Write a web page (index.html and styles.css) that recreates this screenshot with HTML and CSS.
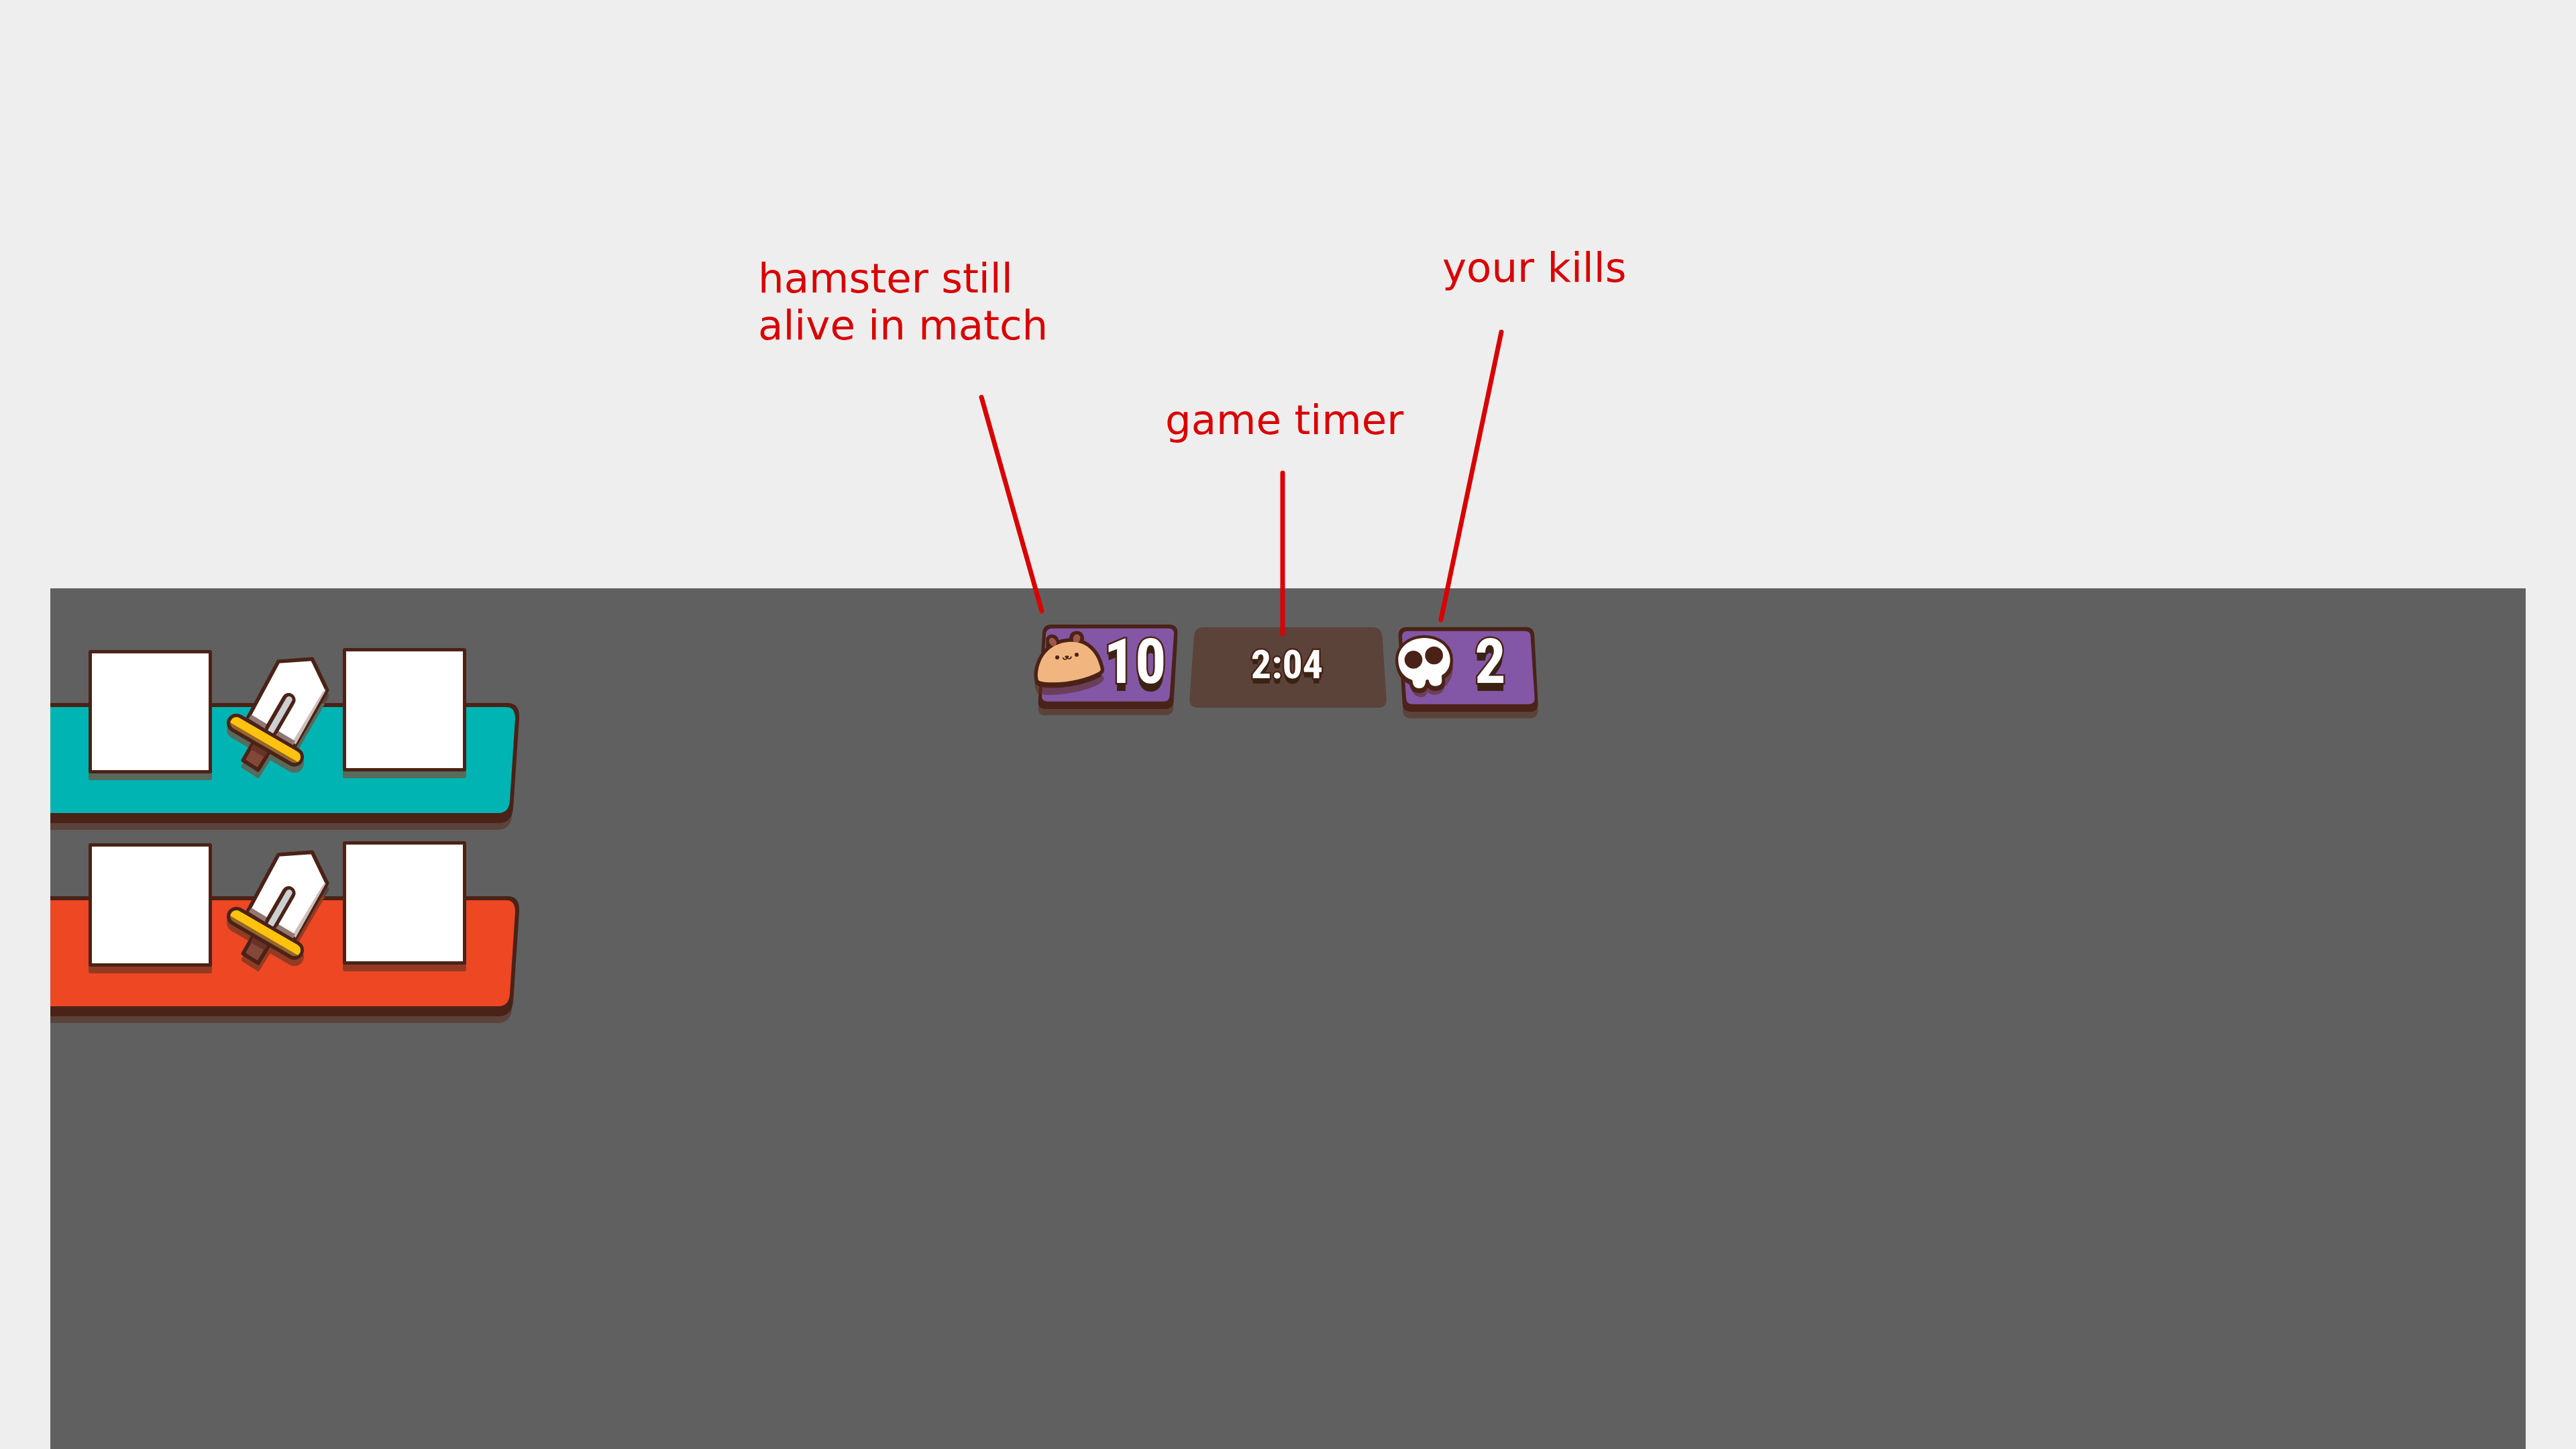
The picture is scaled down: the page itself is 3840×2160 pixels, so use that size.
FILE: index.html
```html
<!DOCTYPE html>
<html lang="en">
<head>
<meta charset="utf-8">
<title>Match HUD</title>
<link rel="stylesheet" href="styles.css">
</head>
<body>
<svg class="defs" aria-hidden="true">
  <symbol id="sword" viewBox="-12 45 585 615">
    <clipPath id="over-screen"><path d="M0 0H600V296H0Z"/></clipPath>
    <clipPath id="over-banner"><path d="M0 296H600V700H0Z"/></clipPath>
    <clipPath id="guard"><path d="M110.700 360.700L370.700 511.700A27 27 0 0 1 343.300 558.300L83.300 407.300A27 27 0 0 1 110.700 360.700Z"/></clipPath>
    <g class="sword-shadow-screen" clip-path="url(#over-screen)">
      <path d="M285 136L436 125L503 264L356 518L150 388Z"/>
    </g>
    <g class="sword-shadow-banner" clip-path="url(#over-banner)">
      <path d="M285 136L436 125L503 264L356 518L150 388Z"/>
      <path class="guard-line" d="M97 412L356 563"/>
      <path d="M172 500L127 578L194 621L242 544Z"/>
    </g>
    <path class="blade" d="M285 108L436 97L503 236L356 490L148 362Z"/>
    <path fill="#cdbfba" d="M496 232L482 246L350 464L362 480L495 241Z"/>
    <path fill="#927870" d="M164 346L360 464L348 486L152 364Z"/>
    <path stroke="#4b2217" stroke-width="62" stroke-linecap="round" d="M331 280L256 410"/>
    <path stroke="#cdd0d3" stroke-width="28" stroke-linecap="round" d="M333 278L252 418"/>
    <path class="handle" d="M172 472L127 550L194 593L242 516Z"/>
    <path fill="#6a3327" d="M173 476L238 512L220 535L160 500Z"/>
    <path class="guard-outline" d="M97 384L356 535"/>
    <g clip-path="url(#guard)">
      <path fill="#92672b" d="M40 330H420V600H40Z"/>
      <path fill="#ffc20e" d="M60 376L400 574L440 480L100 300Z"/>
    </g>
  </symbol>
  <symbol id="banner" viewBox="0 0 704 275">
    <path class="banner-shade" d="M0 92H690L688 252Q686 272 666 272H0Z"/>
    <path class="banner-edge" d="M0 83H682Q700 83 699 106L690 240Q688 262 668 262H0Z"/>
    <path class="banner-fill" d="M0 89H680Q693 89 693 106L685 228Q684 247 668 247H0Z"/>
  </symbol>
</svg>

<header class="notes">
  <p class="note note-alive">hamster still<br>alive in match</p>
  <p class="note note-timer">game timer</p>
  <p class="note note-kills">your kills</p>
  <svg class="pointers" viewBox="1130 0 1580 960" aria-hidden="true">
    <path d="M1463 592L1553 911M1912 705V945M2238 495L2148 924"/>
  </svg>
</header>

<main class="screen">
  <section class="squads">
    <div class="squad squad-teal">
      <svg class="banner"><use href="#banner"/></svg>
      <div class="duel">
        <div class="slot slot-low"></div>
        <svg class="sword"><use href="#sword"/></svg>
        <div class="slot"></div>
      </div>
    </div>
    <div class="squad squad-red">
      <svg class="banner"><use href="#banner"/></svg>
      <div class="duel">
        <div class="slot slot-low"></div>
        <svg class="sword"><use href="#sword"/></svg>
        <div class="slot"></div>
      </div>
    </div>
  </section>

  <section class="hud">
    <div class="badge">
      <svg class="art" viewBox="63 93 696 420" aria-hidden="true">
        <path class="plate-shade" d="M138 121H672Q708 121 706 160L688 463Q686 499 650 499H115Q81 499 83 463L102 157Q104 121 138 121Z"/>
        <path class="ink" d="M142 93H668Q708 93 706 132L688 435Q686 471 650 471H115Q81 471 83 435L102 132Q104 93 142 93Z"/>
        <path class="plate" d="M145 110H665Q692 110 690 136L671 410Q669 437 642 437H124Q98 437 99 410L117 136Q119 110 145 110Z"/>
        <path class="cast" d="M67 350C60 310 85 240 120 215L362 315Q380 325 376 340C350 385 160 420 90 404Q68 398 67 350Z"/>
        <path class="ink" d="M118 200V158C122 134 156 130 170 150L176 164L222 156C222 110 288 110 288 156L286 180Z"/>
        <path class="ink-line" d="M83 350C78 330 80 300 95 265L352 316C290 348 200 368 110 360Q86 358 83 350Z"/>
        <path class="body" d="M83 340C78 320 80 290 95 255C120 200 170 170 235 170C300 172 345 215 362 290Q364 300 352 306C290 338 200 358 110 350Q86 348 83 340Z"/>
        <ellipse class="ear" cx="148" cy="171" rx="15" ry="20" transform="rotate(-35 148 171)"/>
        <ellipse class="ear" cx="255" cy="156" rx="16" ry="20" transform="rotate(12 255 156)"/>
        <path class="fur" d="M83 340C78 320 80 290 95 255C120 200 170 170 235 170C300 172 345 215 362 290Q364 300 352 306C290 338 200 358 110 350Q86 348 83 340Z"/>
        <circle class="ink" cx="168" cy="240" r="9"/>
        <circle class="ink" cx="255" cy="228" r="9"/>
        <ellipse class="ink" cx="211" cy="237" rx="9" ry="5"/>
        <path class="mouth" d="M194 242Q196 250 204 249Q212 247 212 239Q215 247 222 246Q231 244 230 237"/>
      </svg>
      <span class="count count-alive">10</span>
    </div>
    <div class="timer">
      <svg class="art" viewBox="39 93 921 420" aria-hidden="true">
        <path fill="#5b433a" d="M104 105H857Q900 105 902 150L920 425Q922 465 882 465H79Q38 465 40 425L59 150Q61 105 104 105Z"/>
      </svg>
      <time class="clock">2:04</time>
    </div>
    <div class="badge">
      <svg class="art" viewBox="60 93 657 420" aria-hidden="true">
        <path class="plate-shade" d="M110 132H646L698 476Q699 512 662 512H132Q94 512 93 476Z"/>
        <path class="ink" d="M112 104H643Q680 104 682 143L698 447Q699 483 662 483H132Q94 483 92 447L74 143Q73 104 112 104Z"/>
        <path class="plate" d="M116 122H640Q664 122 665 146L683 424Q683 449 659 449H136Q110 449 108 422L90 146Q90 122 116 122Z"/>
        <path class="cast" d="M73 276A116 98 0 0 0 130 367C135 430 200 430 204 392C215 415 275 415 280 372C305 350 318 320 318 280Z"/>
        <path class="ink-line" d="M267 328L268 353C268 370 252 376 240 376C222 376 212 366 210 350Q203 344 196 351C194 376 185 386 166 386C147 386 138 373 136 349C100 338 78 308 75 258H303C305 293 290 316 267 328Z"/>
        <path class="skull" d="M190 153C255 153 305 195 305 250C305 285 290 308 267 320L268 345C268 362 252 368 240 368C222 368 212 358 210 342Q203 336 196 343C194 368 185 378 166 378C147 378 138 365 136 341C100 330 73 300 73 250C73 195 125 153 190 153Z"/>
        <circle class="ink" cx="141" cy="250" r="40"/>
        <circle class="ink" cx="233" cy="231" r="40"/>
      </svg>
      <span class="count count-kills">2</span>
    </div>
  </section>
</main>
</body>
</html>
```

FILE: styles.css
```css
* {
  box-sizing: border-box;
}

body {
  margin: 0;
  min-height: 100vh;
  display: flex;
  flex-direction: column;
  background: #eeeeee;
  font-family: "DejaVu Sans", sans-serif;
}

.defs {
  position: absolute;
  width: 0;
  height: 0;
}

/* annotations */
.notes {
  position: relative;
  min-height: 877px;
  padding-top: 364px;
  display: grid;
  grid-template-columns: 607px 413px 560px;
  justify-content: center;
  align-items: start;
}

.note {
  margin: 0;
  color: #d90000;
  font-size: 61px;
  line-height: 70px;
}

.note-alive {
  margin-top: 16px;
}

.note-timer {
  margin-top: 227px;
}

.pointers {
  position: absolute;
  top: 0;
  left: 50%;
  width: 1580px;
  height: 960px;
  transform: translateX(-50%);
  fill: none;
  stroke: #d90000;
  stroke-width: 7px;
  stroke-linecap: round;
  z-index: 2;
}

/* game screen */
.screen {
  flex: 1;
  margin: 0 75px;
  display: grid;
  grid-template-columns: 1fr auto 1fr;
  align-items: start;
  background: #606060;
}

.squads {
  padding-top: 88px;
  display: grid;
  gap: 13px;
}

.squad {
  display: grid;
}

.squad-teal {
  --team: #00b4b3;
  --shade: #566b5c;
}

.squad-red {
  --team: #ee4723;
  --shade: #933b22;
}

.banner,
.duel {
  grid-area: 1 / 1;
}

.banner {
  display: block;
  width: 704px;
  height: 275px;
}

.banner-shade {
  fill: #5b433a;
}

.banner-edge {
  fill: #4b2217;
}

.banner-fill {
  fill: var(--team);
}

.duel {
  display: flex;
  align-items: flex-start;
  padding-left: 57px;
}

.slot {
  width: 184px;
  height: 184px;
  margin-top: 1px;
  background: #ffffff;
  border: 5px solid #4b2217;
  border-radius: 3px;
  box-shadow: 0 10px 0 var(--shade);
}

.slot-low {
  margin-top: 4px;
}

.sword {
  display: block;
  width: 195px;
  height: 205px;
}

.sword-shadow-screen {
  fill: #5b433a;
  stroke: #5b433a;
  stroke-width: 16px;
  stroke-linejoin: round;
}

.sword-shadow-banner {
  fill: var(--shade);
  stroke: var(--shade);
  stroke-width: 16px;
  stroke-linejoin: round;
}

.guard-line,
.guard-outline {
  stroke-width: 86px;
  stroke-linecap: round;
}

.guard-outline {
  stroke: #4b2217;
}

.blade,
.handle {
  stroke: #4b2217;
  stroke-width: 17px;
  stroke-linejoin: round;
}

.blade {
  fill: #ffffff;
}

.handle {
  fill: #84483a;
}

/* top counters */
.hud {
  padding-top: 54px;
  display: grid;
  grid-template-columns: 232px 307px 219px;
}

.badge,
.timer {
  display: grid;
}

.art,
.count,
.clock {
  grid-area: 1 / 1;
}

.art {
  display: block;
  width: 100%;
  height: 140px;
}

.ink {
  fill: #4b2217;
}

.plate-shade {
  fill: #5b433a;
}

.plate {
  fill: #8357a5;
}

.cast {
  fill: rgba(87, 43, 27, 0.55);
}

.ink-line {
  fill: #4b2217;
  stroke: #4b2217;
  stroke-width: 28px;
  stroke-linejoin: round;
}

.body {
  fill: #4b2217;
  stroke: #4b2217;
  stroke-width: 32px;
}

.fur {
  fill: #f1b580;
}

.ear {
  fill: #9d5847;
}

.mouth {
  fill: none;
  stroke: #4b2217;
  stroke-width: 5px;
  stroke-linecap: round;
}

.skull {
  fill: #ffffff;
  stroke: #4b2217;
  stroke-width: 26px;
  paint-order: stroke;
}

.count,
.clock {
  color: #ffffff;
  font-family: "Liberation Sans Narrow", "Roboto Condensed", "Open Sans Condensed", "Roboto", sans-serif;
  font-weight: 700;
  text-align: center;
  -webkit-text-stroke: 5px #4b2217;
  paint-order: stroke fill;
}

.count {
  font-size: 92px;
  line-height: 112px;
  text-shadow: 0 4px 0 #3b2314, 0 8px 0 #3b2314, 0 12px 0 #3b2314;
}

.count-alive {
  padding-left: 70px;
}

.count-kills {
  padding-left: 64px;
}

.clock {
  padding-right: 16px;
  font-size: 60px;
  line-height: 120px;
  text-shadow: 0 4px 0 #3b2314, 0 8px 0 #3b2314;
}
```
